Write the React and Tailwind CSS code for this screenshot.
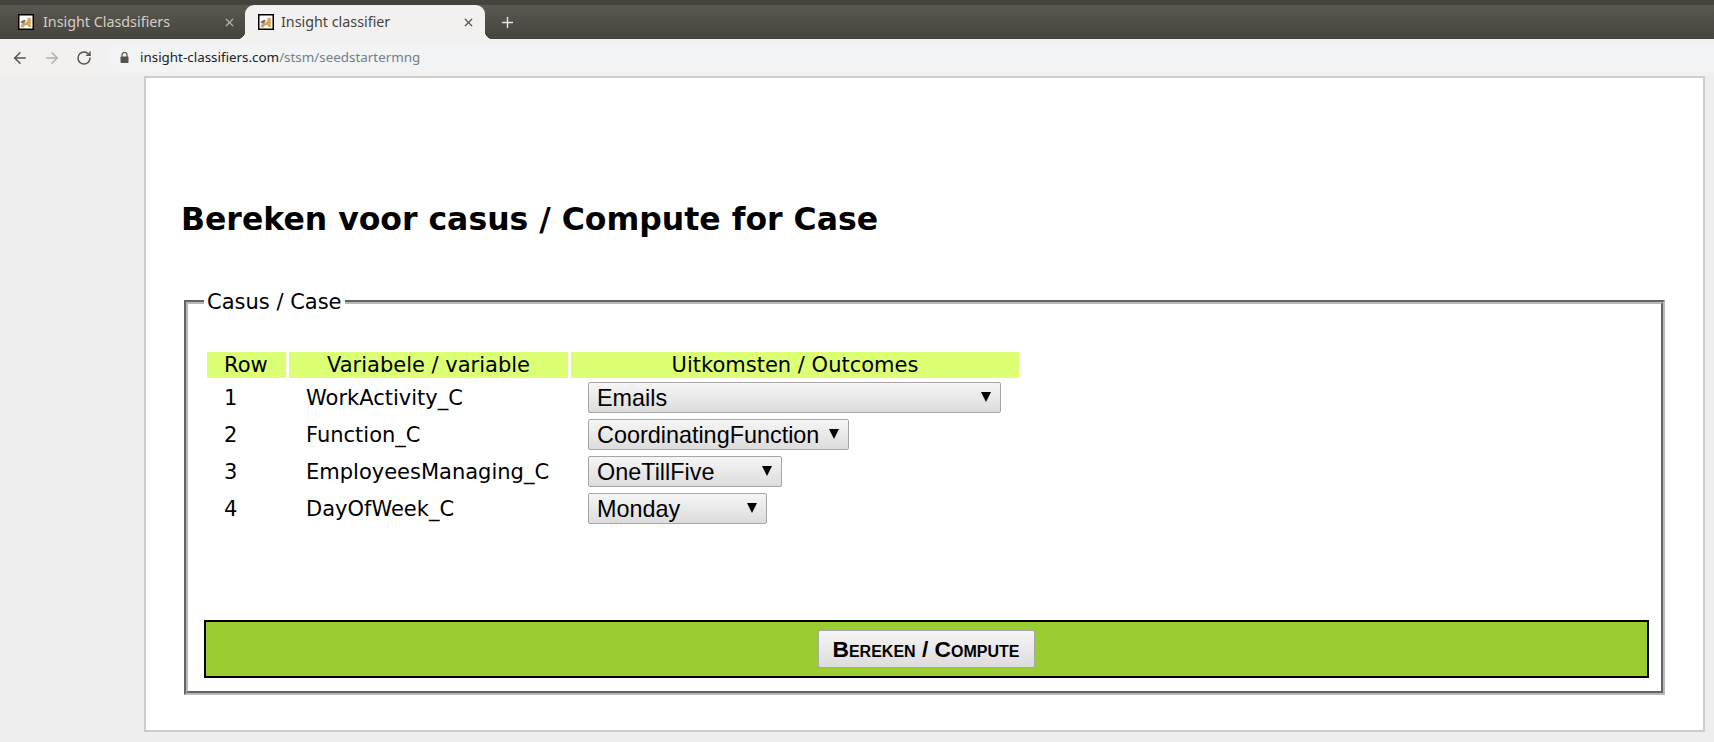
import { ArrowLeft, ArrowRight, RotateCw, X, Plus } from "lucide-react";

const rows = [
  { id: 1, name: "WorkActivity_C", value: "Emails", width: "w-[413px]" },
  { id: 2, name: "Function_C", value: "CoordinatingFunction", width: "w-[261px]" },
  { id: 3, name: "EmployeesManaging_C", value: "OneTillFive", width: "w-[194px]" },
  { id: 4, name: "DayOfWeek_C", value: "Monday", width: "w-[179px]" },
];

function Favicon() {
  return (
    <svg width="16" height="16" viewBox="0 0 16 16" className="shrink-0">
      <rect x="0.75" y="0.75" width="14.5" height="14.5" fill="#fff" stroke="#000" strokeWidth="1.5" />
      <path d="M2.5 12 C3.5 9.5 5.5 8.5 7.5 8.5 L9.5 7 L9.5 3 L11 4.5 L12.5 3 L13 7.5 L12.5 11 L13.5 13 L10.5 13 L9.5 11 L7 11.5 L5.5 13.5 L3 13.5 Z" fill="#d3a45c" />
      <path d="M2.5 8.5 C3.5 6.5 5.5 5.5 8 6.5 L6 9 L4 9.5 Z" fill="#77756a" />
    </svg>
  );
}

function Tab({ title, active }) {
  if (active) {
    return (
      <div className="relative flex items-center w-[240px] h-[34px] bg-[#f2f1f0] rounded-t-[9px] pl-[13px] pr-[10px] gap-[7px]">
        <span className="absolute bottom-0 left-[-8px] w-[8px] h-[8px] bg-[radial-gradient(circle_at_0_0,transparent_8px,#f2f1f0_8.5px)]" />
        <span className="absolute bottom-0 right-[-8px] w-[8px] h-[8px] bg-[radial-gradient(circle_at_100%_0,transparent_8px,#f2f1f0_8.5px)]" />
        <Favicon />
        <span className="flex-1 text-[14.3px] text-[#45433e]">{title}</span>
        <X size={13} strokeWidth={2.4} className="text-[#55534e]" />
      </div>
    );
  }
  return (
    <div className="flex items-center w-[245px] h-[34px] pl-[18px] pr-[9px] gap-[9px]">
      <Favicon />
      <span className="flex-1 text-[14.3px] text-[#d6cfc2]">{title}</span>
      <X size={13} strokeWidth={2.4} className="text-[#b5b2aa]" />
    </div>
  );
}

function CaseSelect({ value, width }) {
  return (
    <div className={`relative ${width} h-[31px]`}>
      <select
        defaultValue={value}
        className="appearance-none w-full h-full pl-[8px] pt-[1px] rounded-[2px] border border-[#a6a6a6] bg-gradient-to-b from-[#f6f6f6] to-[#dcdcdc] text-[23.4px] leading-[29px] text-black font-['Liberation_Sans',sans-serif]"
      >
        <option>{value}</option>
      </select>
      <span className="absolute right-[10px] top-[10px] w-0 h-0 border-x-[5px] border-x-transparent border-t-[10px] border-t-black" />
    </div>
  );
}

export default function App() {
  return (
    <div className="w-[1714px] h-[742px] overflow-hidden bg-[#eeeeee] font-['DejaVu_Sans',sans-serif] text-black">
      <div className="h-[5px] bg-[#45433d]" />
      <div className="flex h-[34px] bg-gradient-to-b from-[#5b5850] to-[#45433e] font-['Noto_Sans',sans-serif]">
        <Tab title="Insight Clasdsifiers" />
        <Tab title="Insight classifier" active />
        <Plus size={17} strokeWidth={2} className="ml-[14px] mt-[9px] text-[#e8e6e1]" />
      </div>
      <div className="flex items-center h-[37px] bg-[#f2f1f0] pl-[11px] font-['Noto_Sans',sans-serif]">
        <ArrowLeft size={18} strokeWidth={2} className="text-[#55534e]" />
        <ArrowRight size={18} strokeWidth={2} className="ml-[14px] text-[#b0aeaa]" />
        <RotateCw size={16} strokeWidth={2.2} className="ml-[15px] text-[#55534e]" />
        <div className="flex items-center flex-1 h-[29px] ml-[15px] pl-[13px] rounded-l-[15px] bg-[#f1f3f4] text-[13.4px]">
          <svg width="9" height="11" viewBox="0 0 9 11" className="mr-[11px] shrink-0">
            <path d="M2 5 V3 a2.5 2.5 0 0 1 5 0 V5" fill="none" stroke="#55534e" strokeWidth="1.2" />
            <rect x="0.5" y="4.5" width="8" height="6.5" rx="1" fill="#55534e" />
          </svg>
          <span className="text-[#202124]">insight-classifiers.com</span>
          <span className="text-[#75808a]">/stsm/seedstartermng</span>
        </div>
      </div>

      <div className="ml-[144px] mr-[9px] h-[656px] border-2 border-[#cccccc] bg-white">
        <h1 className="ml-[35px] pt-[122px] text-[31.5px] leading-[38px] font-bold">
          Bereken voor casus / Compute for Case
        </h1>

        <fieldset className="ml-[38px] mr-[38px] mt-[52px] h-[405px] border-4 [border-style:groove] border-[#b8b8b8] pl-[16px] pr-[12px]">
          <legend className="px-[3px] text-[21px] leading-[24px]">Casus / Case</legend>

          <div className="ml-[3px] mt-[38px] grid grid-cols-[79px_279px_448px] gap-x-[3px] w-[812px] text-[21px]">
            <div className="h-[26px] leading-[26px] pl-[17px] bg-[#dcff73]">Row</div>
            <div className="h-[26px] leading-[26px] text-center bg-[#dcff73]">Variabele / variable</div>
            <div className="h-[26px] leading-[26px] text-center bg-[#dcff73]">Uitkomsten / Outcomes</div>
          </div>

          <div className="ml-[3px] mt-[4px]">
            {rows.map((row) => (
              <div key={row.id} className="flex h-[37px] text-[21px] leading-[33px]">
                <div className="w-[99px] pl-[17px]">{row.id}</div>
                <div className="w-[282px]">{row.name}</div>
                <CaseSelect value={row.value} width={row.width} />
              </div>
            ))}
          </div>

          <div className="mt-[90px] h-[58px] flex items-center justify-center border-2 border-black bg-[#9acd32]">
            <button className="w-[217px] h-[38px] mr-[1px] rounded-[2px] border border-[#a6a6a6] bg-gradient-to-b from-[#f6f6f6] to-[#dcdcdc] text-[22.8px] font-bold [font-variant:small-caps] font-['Liberation_Sans',sans-serif]">
              Bereken / Compute
            </button>
          </div>
        </fieldset>
      </div>
    </div>
  );
}
